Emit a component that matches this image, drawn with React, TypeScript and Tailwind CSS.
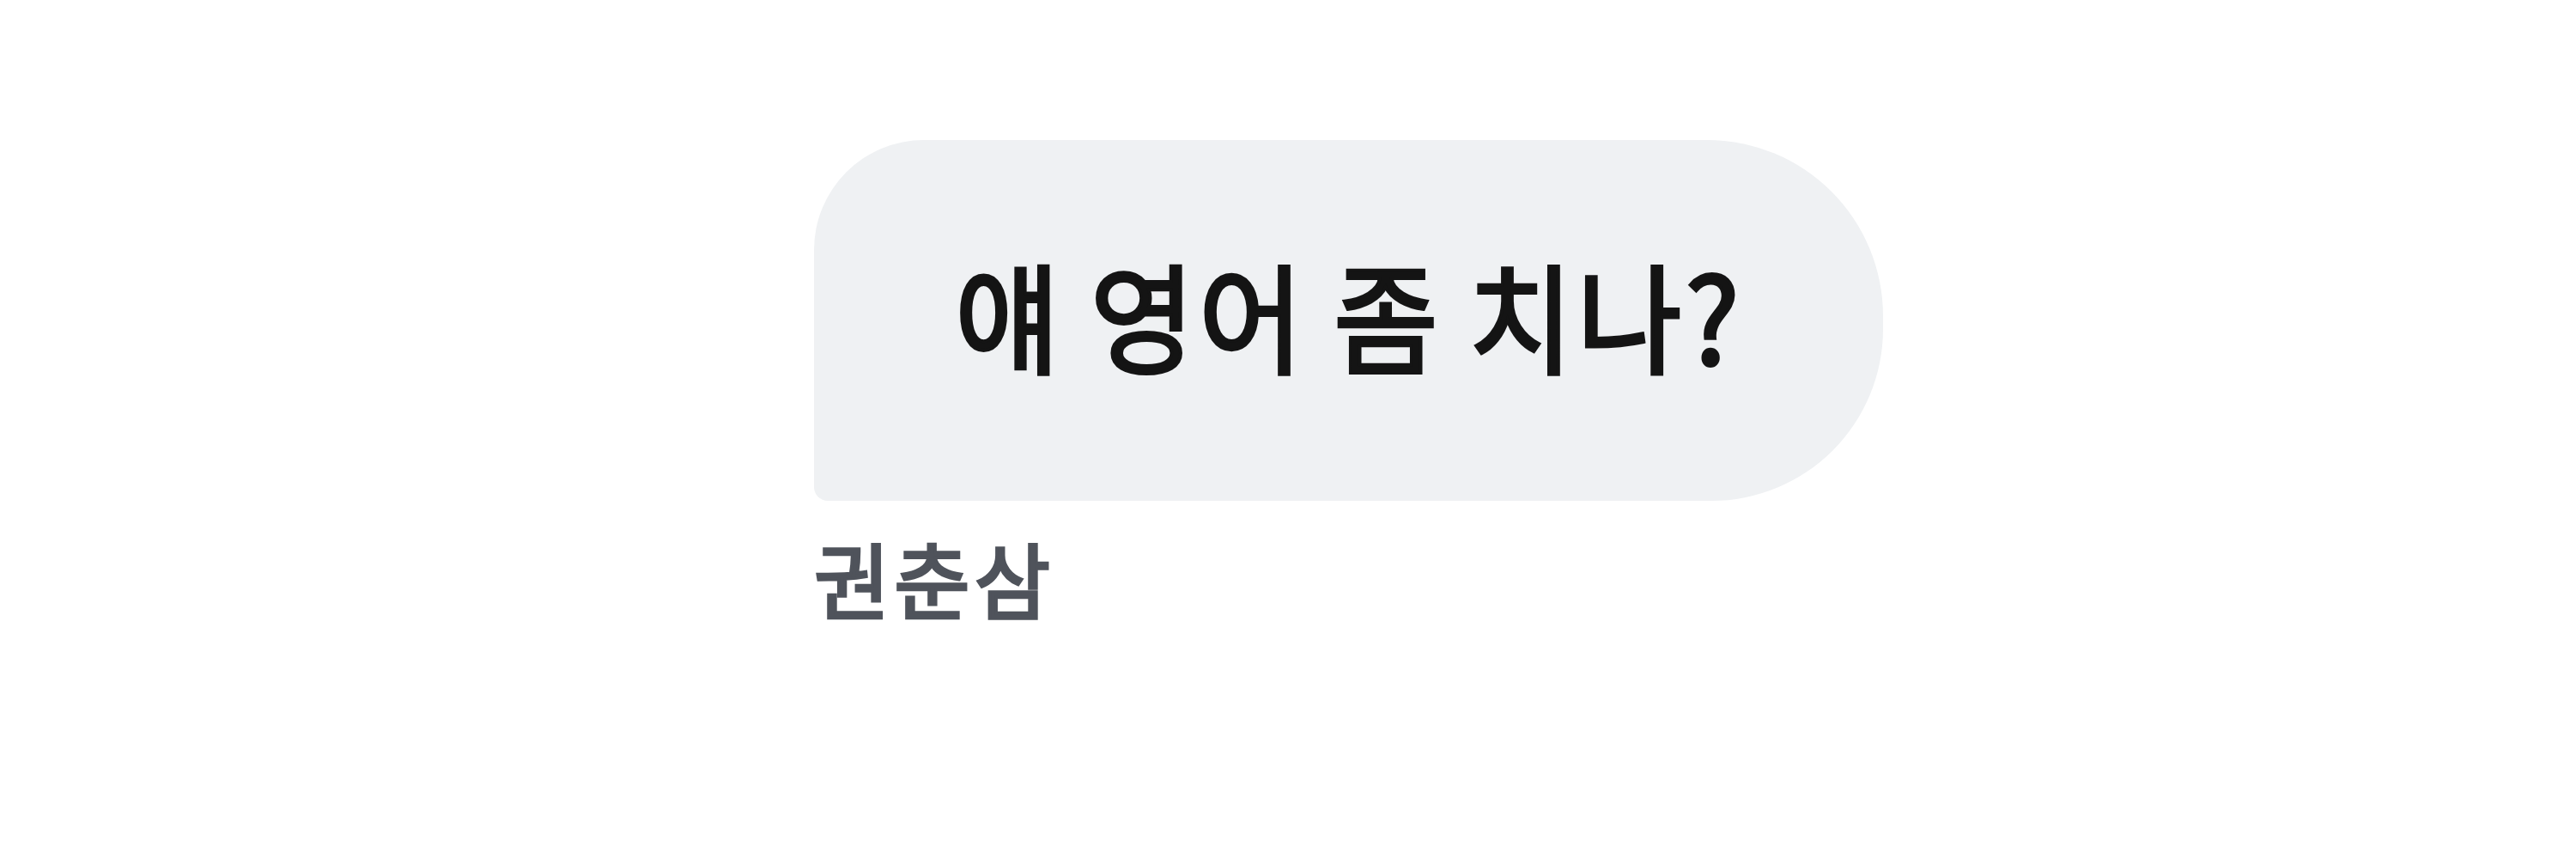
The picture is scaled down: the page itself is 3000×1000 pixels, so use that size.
const KR = { fontFamily: '"Noto Sans CJK KR", "Noto Sans", sans-serif' };

export default function App() {
  return (
    <div className="w-[3000px] h-[1000px] bg-white pl-[948px] pt-[163px]" style={KR}>
      <div className="flex flex-col items-start">
        <div className="w-[1245px] h-[420px] bg-[#eff1f3] rounded-tl-[128px] rounded-tr-[205px] rounded-br-[200px] rounded-bl-[16px] flex items-center justify-center">
          <span className="text-[138px] font-normal text-[#141414] tracking-[4.5px] [word-spacing:-3px] scale-x-96 leading-none pb-[18px] [-webkit-text-stroke:4px_#141414]">
            얘 영어 좀 치나?
          </span>
        </div>
        <div className="mt-[41px] text-[96px] font-normal text-[#4f535b] tracking-[5px] leading-none [-webkit-text-stroke:3.5px_#4f535b]">
          권춘삼
        </div>
      </div>
    </div>
  );
}
